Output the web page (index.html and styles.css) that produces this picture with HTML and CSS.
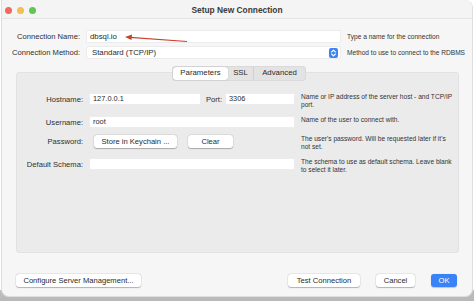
FILE: index.html
```html
<!DOCTYPE html>
<html>
<head>
<meta charset="utf-8">
<link rel="stylesheet" href="styles.css">
</head>
<body>
<div class="window">
  <div class="titlebar">
    <div class="lights"><span class="l red"></span><span class="l yellow"></span><span class="l green"></span></div>
    <div class="title">Setup New Connection</div>
  </div>
  <div class="content">
    <div class="topform">
      <div class="lbl">Connection Name:</div>
      <div class="field wide">dbsql.io</div>
      <div class="help one">Type a name for the connection</div>
      <div class="lbl">Connection Method:</div>
      <div class="field wide popup"><span>Standard (TCP/IP)</span>
        <span class="stepper"><svg width="9" height="10" viewBox="0 0 9 10"><path d="M2.6 4 L4.5 2.2 L6.4 4 M2.6 6 L4.5 7.8 L6.4 6" fill="none" stroke="#fff" stroke-width="1.1" stroke-linecap="round" stroke-linejoin="round"/></svg></span>
      </div>
      <div class="help one">Method to use to connect to the RDBMS</div>
    </div>
    <div class="group">
      <div class="tabs">
        <div class="tab sel">Parameters</div>
        <div class="tab">SSL</div>
        <div class="tab">Advanced</div>
      </div>
      <div class="params">
        <div class="lbl">Hostname:</div>
        <div class="hostcell">
          <div class="field host">127.0.0.1</div>
          <div class="lbl port">Port:</div>
          <div class="field portf">3306</div>
        </div>
        <div class="help">Name or IP address of the server host - and TCP/IP port.</div>

        <div class="lbl">Username:</div>
        <div class="field">root</div>
        <div class="help">Name of the user to connect with.</div>

        <div class="lbl">Password:</div>
        <div class="btnrow">
          <div class="btn keych">Store in Keychain ...</div>
          <div class="btn clear">Clear</div>
        </div>
        <div class="help">The user's password. Will be requested later if it's not set.</div>

        <div class="lbl">Default Schema:</div>
        <div class="field"></div>
        <div class="help">The schema to use as default schema. Leave blank to select it later.</div>
      </div>
    </div>
    <div class="footer">
      <div class="btn cfg">Configure Server Management...</div>
      <div class="right">
        <div class="btn test">Test Connection</div>
        <div class="btn cancel">Cancel</div>
        <div class="btn ok">OK</div>
      </div>
    </div>
  </div>
  <svg class="arrow" width="474" height="60" viewBox="0 0 474 60">
    <path d="M186 41.5 L129 37.4" stroke="#c9402d" stroke-width="1.1" fill="none"/>
    <path d="M124 37 L131 34.4 L130.5 40 Z" fill="#c9402d"/>
  </svg>
</div>
</body>
</html>
```
FILE: styles.css
```css
html, body {
  margin: 0;
  padding: 0;
}
body {
  width: 474px;
  height: 301px;
  overflow: hidden;
  background: linear-gradient(#ffffff 0, #ffffff 290px, #bdbdbd 290px, #b9b9b9 301px);
  font-family: "Liberation Sans", Arial, sans-serif;
  color: #2a2a2a;
}
.window {
  position: relative;
  box-sizing: border-box;
  width: 472px;
  height: 297px;
  margin-left: 1px;
  background: #f6f6f6;
  border: 1px solid #dedede;
  border-top: none;
  border-radius: 0 8px 8px 8px;
  overflow: hidden;
}
.titlebar {
  position: relative;
  height: 18px;
  border-bottom: 1px solid #e4e4e4;
  background: #f4f4f4;
  display: flex;
  align-items: center;
  justify-content: center;
}
.lights {
  position: absolute;
  left: 3px;
  top: 7px;
  display: flex;
  gap: 5px;
}
.l {
  width: 7px;
  height: 7px;
  border-radius: 50%;
  display: block;
}
.red { background: #ec6a5f; }
.yellow { background: #f4be50; }
.green { background: #62c554; }
.title {
  font-weight: bold;
  font-size: 8.4px;
  color: #3a3a3a;
  margin-top: 1px;
}
.content {
  padding-top: 11px;
}
.topform {
  display: grid;
  grid-template-columns: 78px 255px 1fr;
  column-gap: 6px;
  row-gap: 3px;
  align-items: center;
}
.lbl {
  font-size: 7.6px;
  text-align: right;
  color: #2e2e2e;
  white-space: nowrap;
}
.field {
  box-sizing: border-box;
  height: 12px;
  background: #fff;
  border: 1px solid #ececec;
  border-radius: 1px;
  font-size: 7.4px;
  line-height: 10px;
  padding-left: 3px;
  color: #2a2a2a;
  white-space: nowrap;
}
.field.wide {
  height: 13px;
  line-height: 11px;
  font-size: 7.8px;
}
.popup {
  display: flex;
  align-items: center;
  justify-content: space-between;
  padding-left: 5px;
  padding-right: 2px;
  border-radius: 2px;
}
.stepper {
  display: flex;
  width: 9px;
  height: 10px;
  background: #3d84f5;
  border-radius: 2px;
}
.help {
  font-size: 6.6px;
  line-height: 8px;
  color: #333;
}
.group {
  box-sizing: border-box;
  margin: 13px 0 0 14px;
  width: 443px;
  height: 181px;
  background: #ebebeb;
  border: 1px solid #e2e2e2;
  border-radius: 3px;
}
.tabs {
  display: flex;
  width: 132px;
  height: 13px;
  margin: -7px 0 0 155px;
  background: #e3e3e3;
  border: 1px solid #dadada;
  border-radius: 3px;
  font-size: 7.8px;
  line-height: 11px;
}
.tab {
  box-sizing: border-box;
  text-align: center;
  color: #2a2a2a;
  border-left: 1px solid #d0d0d0;
}
.tab:nth-child(1) { width: 55px; border-left: none; }
.tab:nth-child(2) { width: 25px; }
.tab:nth-child(3) { width: 52px; }
.tab.sel {
  background: #fff;
  border-radius: 3px;
  box-shadow: 0 0 1px rgba(0,0,0,0.35);
}
.tab.sel + .tab { border-left: none; }
.params {
  display: grid;
  grid-template-columns: 66px 206px 154px;
  column-gap: 6px;
  row-gap: 7px;
  align-items: start;
  margin-top: 12px;
}
.params .lbl {
  line-height: 11px;
  padding-top: 1px;
}
.hostcell {
  display: flex;
  align-items: center;
}
.host { width: 112px; }
.lbl.port { width: 19px; text-align: left; margin-left: 5px; }
.portf { width: 70px; }
.btnrow {
  display: flex;
  gap: 11px;
  padding-left: 5px;
}
.btn {
  box-sizing: border-box;
  height: 13px;
  background: #fff;
  border-radius: 3px;
  box-shadow: 0 0.5px 1px rgba(0,0,0,0.25), 0 0 0 0.5px rgba(0,0,0,0.08);
  font-size: 7.6px;
  line-height: 13px;
  text-align: center;
  color: #2a2a2a;
  white-space: nowrap;
}
.keych { width: 83px; }
.clear { width: 45px; }
.footer {
  display: flex;
  justify-content: space-between;
  margin: 21px 15px 0 14px;
}
.cfg { width: 125px; }
.right {
  display: flex;
  gap: 16px;
}
.test { width: 72px; }
.cancel { width: 39px; }
.ok {
  width: 26px;
  background: #3a82f7;
  color: #fff;
  box-shadow: 0 0.5px 1px rgba(0,0,0,0.2);
}
.arrow {
  position: absolute;
  left: -1px;
  top: 0;
  pointer-events: none;
}
```
